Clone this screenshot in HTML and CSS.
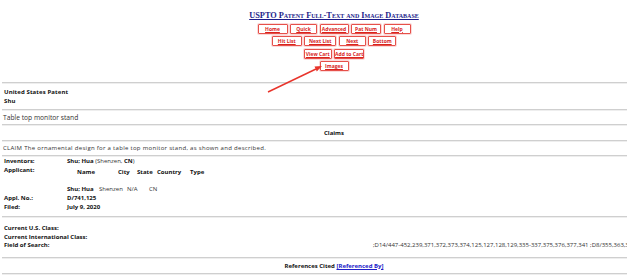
FILE: index.html
```html
<!DOCTYPE html>
<html>
<head>
<meta charset="utf-8">
<link rel="stylesheet" href="styles.css">
</head>
<body>
<div class="page">
  <header class="top">
    <a class="title" href="#">USPTO Patent Full-Text and Image Database</a>
    <div class="btnrow">
      <a class="btn w30" href="#">Home</a>
      <a class="btn w27" href="#">Quick</a>
      <a class="btn w29" href="#">Advanced</a>
      <a class="btn w30" href="#">Pat Num</a>
      <a class="btn w27" href="#">Help</a>
    </div>
    <div class="btnrow">
      <a class="btn w30" href="#">Hit List</a>
      <a class="btn w32" href="#">Next List</a>
      <a class="btn w27" href="#">Next</a>
      <a class="btn w28" href="#">Bottom</a>
    </div>
    <div class="btnrow">
      <a class="btn w28" href="#">View Cart</a>
      <a class="btn w30" href="#">Add to Cart</a>
    </div>
    <div class="btnrow">
      <a class="btn w29" href="#">Images</a>
    </div>
  </header>
  <hr class="rule">
  <div class="patent">
    <b>United States Patent</b>
    <b>Shu</b>
  </div>
  <hr class="rule">
  <div class="ptitle">Table top monitor stand</div>
  <hr class="rule">
  <div class="sect">Claims</div>
  <hr class="rule">
  <div class="claim">CLAIM The ornamental design for a table top monitor stand, as shown and described.</div>
  <hr class="rule">
  <div class="info">
    <div class="lbl">Inventors:</div>
    <div class="val"><b>Shu; Hua</b> (Shenzen, <b>CN</b>)</div>
    <div class="lbl">Applicant:</div>
    <div class="val">
      <div class="app">
        <div class="hd">
          <span class="h1">Name</span><span class="h2">City</span><span class="h3">State</span><span class="h4">Country</span><span class="h5">Type</span>
        </div>
        <div class="dt">
          <span class="d1"><b>Shu; Hua</b></span><span class="d2">Shenzen</span><span class="d3">N/A</span><span class="d4">CN</span>
        </div>
      </div>
    </div>
    <div class="lbl">Appl. No.:</div>
    <div class="val"><b>D/741,125</b></div>
    <div class="lbl">Filed:</div>
    <div class="val"><b>July 9, 2020</b></div>
  </div>
  <hr class="rule">
  <div class="cls">
    <div class="clsrow"><b>Current U.S. Class:</b></div>
    <div class="clsrow"><b>Current International Class:</b></div>
    <div class="clsrow fos"><b>Field of Search:</b><span class="fosval">;D14/447-452,239,371,372,373,374,125,127,128,129,335-337,375,376,377,341 ;D8/355,363,364</span></div>
  </div>
  <hr class="rule">
  <div class="sect">References Cited <a class="ref" href="#">[Referenced By]</a></div>
  <hr class="rule">

  <svg class="arrow" width="627" height="110" viewBox="0 0 627 110">
    <line x1="268" y1="92" x2="316" y2="69" stroke="#e8342b" stroke-width="1.4"/>
    <polygon points="322,66 316.8,71.5 314.5,66.6" fill="#e8342b"/>
  </svg>
</div>
</body>
</html>
```

FILE: styles.css
```css
html, body {
  margin: 0;
  padding: 0;
  background: #fff;
  overflow: hidden;
}
body {
  width: 627px;
  height: 277px;
  font-family: "Open Sans", "Noto Sans", sans-serif;
  font-size: 6px;
  color: #333;
}
.page {
  position: relative;
  width: 668px;
}
b { color: #111; font-weight: 700; }

.top {
  display: flex;
  flex-direction: column;
  align-items: center;
  padding-top: 11px;
  padding-bottom: 11px;
}
.title {
  font-family: "Liberation Serif", serif;
  font-variant: small-caps;
  font-size: 8.3px;
  line-height: 10px;
  color: #1c1c8a;
  text-decoration: underline;
  font-weight: 700;
}
.btnrow {
  display: flex;
  gap: 2.5px;
  margin-top: 2.5px;
}
.btn {
  display: flex;
  align-items: center;
  justify-content: center;
  height: 8px;
  border: 1px solid #e6504a;
  box-shadow: 0 0 0 1px #fbdada;
  border-radius: 1px;
  background: #fff;
  color: #d8231d;
  font-size: 5px;
  font-weight: 700;
  text-decoration: underline;
  white-space: nowrap;
}
.w27 { width: 25px; }
.w28 { width: 26px; }
.w29 { width: 27px; }
.w30 { width: 28px; }
.w32 { width: 30px; }

.rule {
  margin: 0 0 0 2px;
  border: 0;
  border-top: 1px solid #cfcfcf;
  border-bottom: 1px solid #eeeeee;
  height: 0;
}
.patent {
  display: flex;
  flex-direction: column;
  padding: 4px 4px 4px;
  line-height: 8.5px;
  letter-spacing: 0.1px;
}
.ptitle {
  padding: 2px 3px 2px;
  line-height: 9px;
  font-size: 6.7px;
  color: #333;
}
.sect {
  text-align: center;
  font-weight: 700;
  color: #111;
  padding: 3px 0 2px;
  line-height: 9px;
}
.ref {
  color: #2020c8;
  text-decoration: underline;
}
.claim {
  padding: 2px 3px 2px;
  line-height: 9px;
  letter-spacing: 0.3px;
}
.info {
  display: grid;
  grid-template-columns: 63px 1fr;
  padding: 0 4px 4px;
  line-height: 9px;
}
.lbl {
  font-weight: 700;
  color: #111;
}
.app {
  display: flex;
  flex-direction: column;
  padding-top: 2px;
  gap: 8px;
}
.hd, .dt {
  display: flex;
  white-space: nowrap;
}
.hd {
  padding-left: 10px;
  font-weight: 700;
  color: #111;
}
.h1 { width: 41px; }
.h2 { width: 19px; }
.h3 { width: 20px; }
.h4 { width: 33px; }
.d1 { width: 32px; }
.d2 { width: 28px; }
.d3 { width: 22px; }
.cls {
  padding: 6px 4px 7px;
  line-height: 8.5px;
}
.clsrow {
  display: flex;
  white-space: nowrap;
}
.fos b { width: 369px; flex: none; }
.arrow {
  position: absolute;
  left: 0;
  top: 0;
  pointer-events: none;
}
```
